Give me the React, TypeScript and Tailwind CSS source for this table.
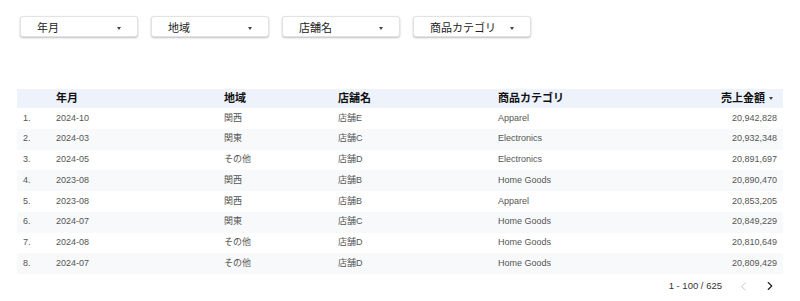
import { ChevronLeft, ChevronRight } from 'lucide-react';

const FILTERS = ['年月', '地域', '店舗名', '商品カテゴリ'];

const ROWS = [
  ['2024-10', '関西', '店舗E', 'Apparel', '20,942,828'],
  ['2024-03', '関東', '店舗C', 'Electronics', '20,932,348'],
  ['2024-05', 'その他', '店舗D', 'Electronics', '20,891,697'],
  ['2023-08', '関西', '店舗B', 'Home Goods', '20,890,470'],
  ['2023-08', '関西', '店舗B', 'Apparel', '20,853,205'],
  ['2024-07', '関東', '店舗C', 'Home Goods', '20,849,229'],
  ['2024-08', 'その他', '店舗D', 'Home Goods', '20,810,649'],
  ['2024-07', 'その他', '店舗D', 'Home Goods', '20,809,429'],
];

const GRID = 'grid grid-cols-[39px_168px_114px_160px_1fr_160px] items-center';

function Caret() {
  return <span className="w-0 h-0 border-l-[2.5px] border-r-[2.5px] border-t-[3px] border-l-transparent border-r-transparent border-t-[#444]" />;
}

function FilterButton({ label }: { label: string }) {
  return (
    <div className="w-[118px] h-[21px] bg-white rounded-[3px] border border-[#e2e2e2] shadow-[0_1px_2px_rgba(0,0,0,0.25)] flex items-center justify-between pl-[16px] pr-[16px] pt-[3px]">
      <span className="text-[11px] text-[#222]">{label}</span>
      <Caret />
    </div>
  );
}

export default function App() {
  return (
    <div className="w-[800px] h-[301px] bg-white font-['Liberation_Sans','Noto_Sans_CJK_JP',sans-serif] relative overflow-hidden">
      <div className="flex gap-[13px] pl-[20px] pt-[16px]">
        {FILTERS.map(f => <FilterButton key={f} label={f} />)}
      </div>

      <div className="mx-[17px] mt-[52px]">
        {/* header */}
        <div className={`${GRID} h-[19px] bg-[#edf2fb] text-[11px] font-bold text-[#111]`}>
          <span />
          <span>年月</span>
          <span>地域</span>
          <span>店舗名</span>
          <span className="col-span-2 flex items-center justify-end gap-[4px] pr-[10px]">
            <span className="mr-auto">商品カテゴリ</span>
            売上金額
            <Caret />
          </span>
        </div>

        {ROWS.map((r, i) => (
          <div key={i} className={`${GRID} h-[20.75px] text-[9px] text-[#555] ${i % 2 === 1 ? 'bg-[#f8f9fa]' : 'bg-white'}`}>
            <span className="pl-[6px]">{i + 1}.</span>
            <span>{r[0]}</span>
            <span>{r[1]}</span>
            <span>{r[2]}</span>
            <span>{r[3]}</span>
            <span className="text-right pr-[6px]">{r[4]}</span>
          </div>
        ))}

        <div className="flex items-center justify-end h-[24px] text-[9.5px] text-[#333]">
          <span>1 - 100 / 625</span>
          <ChevronLeft className="ml-[14px] w-[15px] h-[15px] text-[#bbb]" strokeWidth={1.25} />
          <ChevronRight className="ml-[12px] mr-[6px] w-[14px] h-[14px] text-[#222]" strokeWidth={2} />
        </div>
      </div>
    </div>
  );
}
